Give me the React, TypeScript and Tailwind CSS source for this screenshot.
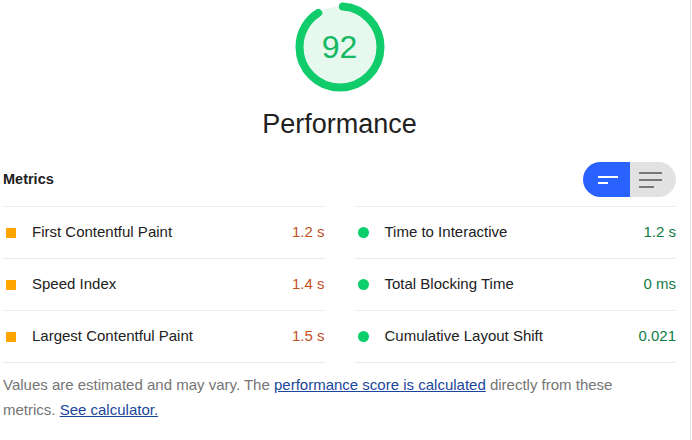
import React from 'react'

type Metric = { label: string; value: string; status: 'average' | 'pass' }

const left: Metric[] = [
  { label: 'First Contentful Paint', value: '1.2 s', status: 'average' },
  { label: 'Speed Index', value: '1.4 s', status: 'average' },
  { label: 'Largest Contentful Paint', value: '1.5 s', status: 'average' },
]

const right: Metric[] = [
  { label: 'Time to Interactive', value: '1.2 s', status: 'pass' },
  { label: 'Total Blocking Time', value: '0 ms', status: 'pass' },
  { label: 'Cumulative Layout Shift', value: '0.021', status: 'pass' },
]

function Gauge({ score }: { score: number }) {
  const r = 40.5
  const c = 2 * Math.PI * r
  return (
    <div className="relative w-[90px] h-[90px]">
      <svg width="90" height="90" viewBox="0 0 90 90" className="absolute inset-0">
        <circle cx="45" cy="45" r={r} fill="#e7f9ef" />
        <circle
          cx="45"
          cy="45"
          r={r}
          fill="none"
          stroke="#10cc6a"
          strokeWidth="8"
          strokeLinecap="round"
          strokeDasharray={`${(score / 100) * c - 6} ${c}`}
          transform="rotate(-90 45 45)"
          style={{ strokeDashoffset: -3 }}
        />
      </svg>
      <div className="absolute inset-0 flex items-center justify-center text-[32px] text-[#16b862] leading-none">
        {score}
      </div>
    </div>
  )
}

function Row({ m }: { m: Metric }) {
  return (
    <div className="flex items-center h-[52px] border-t border-[#ebebeb]">
      {m.status === 'average' ? (
        <span className="ml-[3px] w-[10px] h-[10px] bg-[#ffa400] shrink-0" />
      ) : (
        <span className="ml-[3px] w-[11px] h-[11px] rounded-full bg-[#0cce6b] shrink-0" />
      )}
      <span className="ml-[16px] text-[#212121]">{m.label}</span>
      <span className={m.status === 'average' ? 'ml-auto text-[#c2501e]' : 'ml-auto text-[#117c45]'}>{m.value}</span>
    </div>
  )
}

export default function App() {
  return (
    <div className="flex w-[692px] h-[440px] bg-white overflow-hidden" style={{ fontFamily: '"Liberation Sans", Arial, sans-serif' }}>
      <div className="w-[690px] pl-[3px] pr-[14px] text-[15px]">
        <div className="flex flex-col items-center pt-[2px]">
          <Gauge score={92} />
          <h1 className="mt-[17px] text-[27px] leading-[31px] text-[#212121]">Performance</h1>
        </div>

        <div className="mt-[22px] flex items-center justify-between pb-[9px]">
          <h2 className="text-[14.5px] font-bold text-[#212121]">Metrics</h2>
          <div className="flex h-[35px] w-[93px] rounded-full overflow-hidden">
            <div className="w-[47px] bg-[#2962ff] flex flex-col justify-center pl-[15px] gap-[2px]">
              <span className="block w-[20px] h-[2px] bg-white" />
              <span className="block w-[10px] h-[2px] bg-white mt-[2px]" />
            </div>
            <div className="flex-1 bg-[#e2e2e2] flex flex-col justify-center pl-[9px] gap-[5px]">
              <span className="block w-[23px] h-[2px] bg-[#777]" />
              <span className="block w-[23px] h-[2px] bg-[#777]" />
              <span className="block w-[15px] h-[2px] bg-[#777]" />
            </div>
          </div>
        </div>

        <div className="grid grid-cols-2 gap-x-[30px]">
          <div className="border-b border-[#ebebeb]">
            {left.map((m) => (
              <Row key={m.label} m={m} />
            ))}
          </div>
          <div className="border-b border-[#ebebeb]">
            {right.map((m) => (
              <Row key={m.label} m={m} />
            ))}
          </div>
        </div>

        <p className="mt-[9px] w-[640px] leading-[25px] text-[#757575]">
          Values are estimated and may vary. The{' '}
          <a href="#" className="text-[#1a479c] underline">performance score is calculated</a> directly from these metrics.{' '}
          <a href="#" className="text-[#1a479c] underline">See calculator.</a>
        </p>
      </div>
      <div className="w-px h-full bg-[#e4e4e4]" />
    </div>
  )
}
